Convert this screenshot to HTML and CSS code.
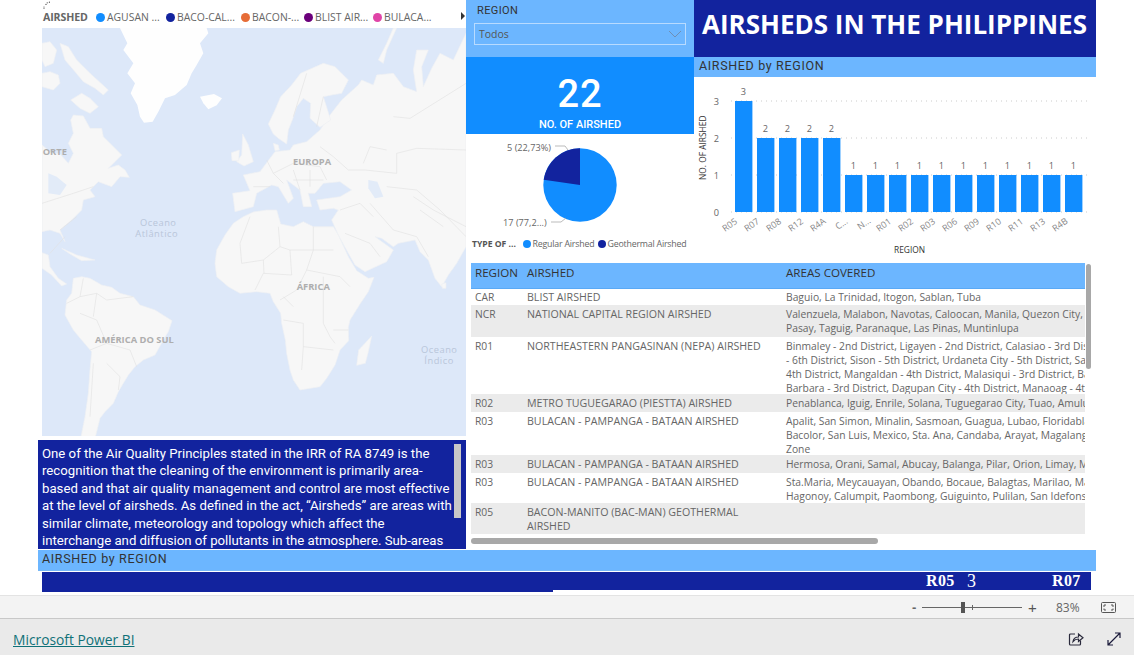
FILE: index.html
```html
<!DOCTYPE html>
<html lang="en">
<head>
<meta charset="utf-8">
<title>Airsheds in the Philippines</title>
<link rel="stylesheet" href="styles.css">
</head>
<body>
<main class="canvas">
  <div class="report">
    <section class="left">
      <div class="legend">
        <svg class="loader" viewBox="0 0 8 8" width="8" height="8"><circle cx="1" cy="6" r=".6"/><circle cx="1" cy="7.600" r=".5"/><circle cx="3" cy="3.400" r=".6"/><circle cx="4.200" cy="1.800" r=".6"/><circle cx="6.400" cy="1.200" r=".6"/></svg>
        <span class="legend-title">AIRSHED</span>
        <span class="legend-item w-agusan"><i class="dot c1"></i>AGUSAN ...</span>
        <span class="legend-item w-baco"><i class="dot c2"></i>BACO-CAL...</span>
        <span class="legend-item w-bacon"><i class="dot c3"></i>BACON-...</span>
        <span class="legend-item w-blist"><i class="dot c4"></i>BLIST AIR...</span>
        <span class="legend-item"><i class="dot c5"></i>BULACA...</span>
        <span class="legend-arrow"></span>
      </div>
      <svg class="map" viewBox="6 -6 1272 1224" preserveAspectRatio="none">
        <g class="land">
          <path d="M6 345L35 370 60 372 85 400 100 370 85 340 100 310 92 270 100 255 130 258 150 295 185 295 190 320 215 345 245 375 225 395 205 415 235 405 255 420 268 442 240 440 215 470 175 455 150 480 165 500 130 510 125 540 95 570 60 600 75 635 60 610 30 600 6 605Z"/>
          <path d="M60 40L85 50 110 90 150 130 205 180 190 195 165 175 130 155 105 125 75 90Z"/>
          <path d="M6 130L30 125 55 135 60 160 40 180 6 170Z"/>
          <path d="M6 40L30 35 50 60 40 100 15 110 6 90Z"/>
          <path d="M92 210L125 190 150 205 175 230 150 250 120 235Z"/>
          <path d="M6 668L25 675 30 710 55 745 80 762 65 768 35 735 6 715Z"/>
          <path d="M65 655L110 675 165 690 125 692 90 672Z"/>
          <path d="M100 745L125 740 150 745 185 765 215 772 240 790 280 800 300 825 345 840 396 872 385 905 370 930 345 975 310 990 285 1010 265 1035 250 1060 235 1085 220 1120 195 1145 180 1165 165 1225 122 1225 135 1160 145 1090 150 1020 155 965 125 930 100 900 75 855 80 810 95 790Z"/>
          <path d="M530 660L555 615 580 580 610 560 640 546 680 540 710 540 722 582 760 590 790 575 820 590 880 590 895 615 925 680 950 722 985 745 1002 742 985 785 960 822 930 870 925 892 926 932 900 960 885 1005 860 1045 840 1070 780 1080 760 1050 750 1020 740 970 736 930 725 880 722 850 700 815 690 790 650 785 600 790 565 770 530 740 525 700Z"/>
          <path d="M840 300L870 255 905 210 955 165 965 150 1000 165 1010 135 1060 130 1090 170 1130 185 1120 120 1130 60 1165 60 1145 110 1150 170 1175 115 1200 70 1240 90 1278 10 1278 650 1250 700 1225 735 1205 770 1185 745 1165 690 1140 665 1125 630 1075 640 1060 650 1025 625 1005 620 1060 660 1040 695 975 725 945 705 925 670 895 615 875 570 895 540 880 535 840 540 830 510 900 500 935 480 900 455 850 460 825 490 805 490 815 530 790 530 780 480 760 465 740 450 760 505 745 520 715 470 695 465 650 490 640 530 585 545 578 490 630 482 610 435 660 425 690 385 705 365 750 360 760 345 800 335Z"/>
          <path d="M685 282L705 240 722 200 755 165 782 130 850 100 885 110 925 150 905 190 875 195 850 200 872 270 840 292 810 265 812 220 790 205 770 230 760 262 745 300 740 342 715 325 700 312Z"/>
          <path d="M1015 90L1040 40 1060 -6 1070 -6 1040 60 1030 100Z"/>
          <path d="M590 395L605 375 608 312 625 345 640 395 612 408Z"/>
          <path d="M574 368L598 360 596 392 576 392Z"/>
          <path d="M700 340L715 345 718 360 705 362Z"/>
          <path d="M956 960L975 940 995 918 985 965 976 1000 950 1006Z"/>
          <path d="M1205 762L1218 758 1218 775 1207 775Z"/>
        </g>
        <g class="snow">
          <path d="M240 -6L500 -6 505 10 480 40 490 70 470 105 455 130 440 165 405 195 375 205 355 245 338 275 312 278 300 260 292 225 272 190 285 160 262 130 280 100 250 60 262 40Z"/>
          <path d="M480 200L522 192 546 205 530 226 505 238 490 220Z"/>
        </g>
        <g class="lakes">
          <path d="M985 450L1012 455 1030 500 1005 505 985 475Z"/>
          <path d="M25 430L50 440 80 465 60 495 25 490Z"/>
        </g>
        <g class="borders">
          <path d="M600 640L630 560M600 640L605 700 670 690 720 650 715 590M720 650L750 660 820 660 820 590M820 660L880 660M750 660L755 735 670 730 645 780M670 690L672 730M800 720L820 660M800 720L770 780 720 810M800 720L900 740M850 740L850 880 870 920 885 940M730 870L790 880 790 950 785 1020M790 950L880 960M880 900L925 900M900 740L930 770M730 800L760 830"/>
          <path d="M130 745L120 800 170 790 200 810 280 800M120 800L80 820M120 850L170 870 200 940 270 960 290 1010M150 960L200 940M170 790L160 860M200 1000L240 1040M240 1040L235 1080M160 1000L150 1160"/>
          <path d="M1278 360L1130 355 1070 370 1070 430 975 420 925 420 880 380 840 350M1040 470L1130 480 1200 540 1278 620M990 520L1060 600 1130 620M900 540L960 520 1000 560M915 610L990 640 1020 680M1130 620L1165 680M1040 360L990 350 970 400M1278 160L1110 265 1060 260"/>
          <path d="M700 430L760 400 840 410 860 450M700 430L730 460M760 420L780 480M810 420L810 470M760 450L850 450M680 390L700 430M640 470L690 470M850 200L830 290M800 130L760 260"/>
          <path d="M6 520L100 490 160 470M60 600L110 560M30 670L75 620"/>
          <path d="M1120 500L1180 540 1278 590M1140 540L1210 590"/>
        </g>
        <text class="map-label" x="8" y="374">ORTE</text>
        <text class="map-label" x="759" y="404">EUROPA</text>
        <text class="map-label" x="770" y="781">ÁFRICA</text>
        <text class="map-label" x="165" y="940">AMÉRICA DO SUL</text>
        <text class="map-sea" x="300" y="588">Oceano</text>
        <text class="map-sea" x="286" y="620">Atlântico</text>
        <text class="map-sea" x="1143" y="970">Oceano</text>
        <text class="map-sea" x="1153" y="1002">Índico</text>
      </svg>
      <div class="intro">
        <p>One of the Air Quality Principles stated in the IRR of RA 8749 is the<br>recognition that the cleaning of the environment is primarily area-<br>based and that air quality management and control are most effective<br>at the level of airsheds. As defined in the act, “Airsheds” are areas with<br>similar climate, meteorology and topology which affect the<br>interchange and diffusion of pollutants in the atmosphere. Sub-areas</p>
        <span class="intro-thumb"></span>
      </div>
    </section>

    <section class="right">
      <div class="top">
        <div class="middle">
          <div class="slicer">
            <div class="din slicer-label">REGION</div>
            <div class="dropdown"><span>Todos</span>
              <svg class="chevron" viewBox="0 0 14 8" width="14" height="8"><path d="M1 1L7 7 13 1"/></svg>
            </div>
          </div>
          <div class="card">
            <div class="din card-value">22</div>
            <div class="din card-label">NO. OF AIRSHED</div>
          </div>
          <svg class="pie" viewBox="466 134 228 127">
            <circle class="p-blue" cx="580" cy="185" r="36.700"/>
            <path class="p-dark" d="M580 185V148.300A36.700 36.700 0 0 0 543.700 179.800Z"/>
            <path class="leader" d="M555 146H565L568 150M551 222H561L566 218"/>
            <text class="lbl" x="507" y="151">5 (22,73%)</text>
            <text class="lbl" x="503" y="226">17 (77,2...)</text>
            <text class="lbl-b" x="472" y="247">TYPE OF ...</text>
            <circle class="p-blue" cx="527" cy="244" r="4"/>
            <text class="lbl-n" x="532.500" y="247">Regular Airshed</text>
            <circle class="p-dark" cx="602" cy="244" r="4"/>
            <text class="lbl-n" x="607.500" y="247">Geothermal Airshed</text>
          </svg>
        </div>
        <div class="side">
          <h1 class="title">AIRSHEDS IN THE PHILIPPINES</h1>
          <div class="din band">AIRSHED by REGION</div>
          <svg class="chart" viewBox="694 77 402 186">
            <path class="grid" d="M731 101H1088M731 138H1088M731 175H1088M731 212H1088"/>
            <g class="bars">
              <rect x="735" y="101" width="17.400" height="111"/><rect x="757" y="138" width="17.400" height="74"/><rect x="779" y="138" width="17.400" height="74"/><rect x="801" y="138" width="17.400" height="74"/><rect x="823" y="138" width="17.400" height="74"/><rect x="845" y="175" width="17.400" height="37"/><rect x="867" y="175" width="17.400" height="37"/><rect x="889" y="175" width="17.400" height="37"/><rect x="911" y="175" width="17.400" height="37"/><rect x="933" y="175" width="17.400" height="37"/><rect x="955" y="175" width="17.400" height="37"/><rect x="977" y="175" width="17.400" height="37"/><rect x="999" y="175" width="17.400" height="37"/><rect x="1021" y="175" width="17.400" height="37"/><rect x="1043" y="175" width="17.400" height="37"/><rect x="1065" y="175" width="17.400" height="37"/>
            </g>
            <g class="vals">
              <text x="743.500" y="95">3</text><text x="765.500" y="132">2</text><text x="787.500" y="132">2</text><text x="809.500" y="132">2</text><text x="831.500" y="132">2</text><text x="853.500" y="169">1</text><text x="875.500" y="169">1</text><text x="897.500" y="169">1</text><text x="919.500" y="169">1</text><text x="941.500" y="169">1</text><text x="963.500" y="169">1</text><text x="985.500" y="169">1</text><text x="1007.500" y="169">1</text><text x="1029.500" y="169">1</text><text x="1051.500" y="169">1</text><text x="1073.500" y="169">1</text>
            </g>
            <g class="yticks">
              <text x="719" y="105">3</text><text x="719" y="142">2</text><text x="719" y="179">1</text><text x="719" y="216">0</text>
            </g>
            <g class="xticks">
              <text transform="translate(725 232) rotate(-35)">R05</text><text transform="translate(747 232) rotate(-35)">R07</text><text transform="translate(769 232) rotate(-35)">R08</text><text transform="translate(791 232) rotate(-35)">R12</text><text transform="translate(813 232) rotate(-35)">R4A</text><text transform="translate(838 230) rotate(-35)">C...</text><text transform="translate(860 230) rotate(-35)">N...</text><text transform="translate(879 232) rotate(-35)">R01</text><text transform="translate(901 232) rotate(-35)">R02</text><text transform="translate(923 232) rotate(-35)">R03</text><text transform="translate(945 232) rotate(-35)">R06</text><text transform="translate(967 232) rotate(-35)">R09</text><text transform="translate(989 232) rotate(-35)">R10</text><text transform="translate(1011 232) rotate(-35)">R11</text><text transform="translate(1033 232) rotate(-35)">R13</text><text transform="translate(1055 232) rotate(-35)">R4B</text>
            </g>
            <text class="axis" transform="translate(706 180) rotate(-90)">NO. OF AIRSHED</text>
            <text class="axis" x="894" y="253">REGION</text>
          </svg>
        </div>
      </div>
      <div class="table-wrap">
        <div class="table">
          <div class="row head"><div>REGION</div><div>AIRSHED</div><div>AREAS COVERED</div></div>
          <div class="row r-1"><div>CAR</div><div>BLIST AIRSHED</div><div>Baguio, La Trinidad, Itogon, Sablan, Tuba</div></div>
          <div class="row alt r-2"><div>NCR</div><div>NATIONAL CAPITAL REGION AIRSHED</div><div>Valenzuela, Malabon, Navotas, Caloocan, Manila, Quezon City, Marikina, Pasig<br>Pasay, Taguig, Paranaque, Las Pinas, Muntinlupa</div></div>
          <div class="row r-4"><div>R01</div><div>NORTHEASTERN PANGASINAN (NEPA) AIRSHED</div><div>Binmaley - 2nd District, Ligayen - 2nd District, Calasiao - 3rd District, Alaminos<br>- 6th District, Sison - 5th District, Urdaneta City - 5th District, San Fabian<br>4th District, Mangaldan - 4th District, Malasiqui - 3rd District, Bayambang<br>Barbara - 3rd District, Dagupan City - 4th District, Manaoag - 4th District</div></div>
          <div class="row alt r-1b"><div>R02</div><div>METRO TUGUEGARAO (PIESTTA) AIRSHED</div><div>Penablanca, Iguig, Enrile, Solana, Tuguegarao City, Tuao, Amulung, Alcala</div></div>
          <div class="row r-3"><div>R03</div><div>BULACAN - PAMPANGA - BATAAN AIRSHED</div><div>Apalit, San Simon, Minalin, Sasmoan, Guagua, Lubao, Floridablanca, Porac<br>Bacolor, San Luis, Mexico, Sta. Ana, Candaba, Arayat, Magalang, Clark Special<br>Zone</div></div>
          <div class="row alt r-1b"><div>R03</div><div>BULACAN - PAMPANGA - BATAAN AIRSHED</div><div>Hermosa, Orani, Samal, Abucay, Balanga, Pilar, Orion, Limay, Mariveles, Bagac</div></div>
          <div class="row r-2b"><div>R03</div><div>BULACAN - PAMPANGA - BATAAN AIRSHED</div><div>Sta.Maria, Meycauayan, Obando, Bocaue, Balagtas, Marilao, Malolos, Plaridel<br>Hagonoy, Calumpit, Paombong, Guiguinto, Pulilan, San Idefonso, Baliuag</div></div>
          <div class="row alt r-2"><div>R05</div><div>BACON-MANITO (BAC-MAN) GEOTHERMAL<br>AIRSHED</div><div></div></div>
        </div>
        <span class="v-thumb"></span>
        <span class="h-thumb"></span>
      </div>
    </section>
  </div>

  <div class="din wide-band">AIRSHED by REGION</div>
  <div class="ticker">
    <div class="ticker-left"></div>
    <div class="ticker-right"><span class="t-a">R05</span><span class="t-b">3</span><span class="t-c">R07</span></div>
  </div>
</main>

<div class="statusbar">
  <span class="zoom-sign minus">-</span>
  <span class="slider"><i class="tick"></i><i class="thumb"></i></span>
  <span class="zoom-sign plus">+</span>
  <span class="pct">83%</span>
  <svg class="fit" viewBox="0 0 15 11" width="15" height="11"><rect x=".5" y=".5" width="14" height="10" rx="1"/><path d="M3 5V3H5M10 3H12V5M12 6.500V8H10M5 8H3V6.500"/></svg>
</div>
<footer class="footer">
  <a class="brand" href="#">Microsoft Power BI</a>
  <div class="foot-icons">
    <svg class="share" viewBox="0 0 16 16" width="16" height="16"><path d="M7 3H2.500A1 1 0 0 0 1.500 4V13A1 1 0 0 0 2.500 14H11.500A1 1 0 0 0 12.500 13V9.500"/><path d="M5 10.500C5.500 7.500 7.500 6 10.500 6V3L15 6.800 10.500 10.500V8C8.500 8 6.500 8.700 5 10.500Z"/></svg>
    <svg class="expand" viewBox="0 0 14 14" width="14" height="14"><path d="M1 13L13 1M8 1H13V6M1 8V13H6"/></svg>
  </div>
</footer>
</body>
</html>
```
FILE: styles.css
```css
* { box-sizing: border-box; }
html, body { margin: 0; padding: 0; }
body {
  width: 1134px;
  height: 655px;
  overflow: hidden;
  background: #fff;
  font-family: "Open Sans", "Noto Sans", sans-serif;
  color: #555;
}
.din { font-family: "Roboto", "Liberation Sans", sans-serif; }

.canvas { height: 595px; padding-left: 38px; width: 1096px; }
.report { display: grid; grid-template-columns: 428px 630px; height: 550px; }

/* left column */
.left { display: flex; flex-direction: column; }
.legend {
  position: relative;
  display: flex;
  align-items: center;
  height: 28px;
  padding: 6px 0 0 5px;
  font-size: 10.400px;
  color: #666;
  white-space: nowrap;
}
.loader { position: absolute; left: 5px; top: 1px; fill: #444; }
.legend-title { width: 53px; font-weight: 700; font-size: 10.600px; letter-spacing: -.1px; }
.legend-item { display: flex; align-items: center; width: 75px; }
.w-agusan { width: 70px; }
.w-baco { width: 75px; }
.w-bacon { width: 63px; }
.w-blist { width: 69px; }
.dot { width: 9px; height: 9px; border-radius: 50%; margin-right: 2px; flex: none; }
.c1 { background: #118dff; }
.c2 { background: #12239e; }
.c3 { background: #e66c37; }
.c4 { background: #6b007b; }
.c5 { background: #e044a7; }
.legend-arrow {
  position: absolute;
  left: 423px;
  top: 12px;
  border-left: 4px solid #333;
  border-top: 4px solid transparent;
  border-bottom: 4px solid transparent;
}
.map { display: block; width: 424px; height: 408px; margin-left: 4px; background: #dde8f9; }
.land { filter: blur(1.5px); }
.land path { fill: #f7f7f7; stroke: #eef0f3; stroke-width: 2; }
.snow { filter: blur(1.5px); }
.snow path { fill: #fefefe; }
.lakes path { fill: #e2ebf8; }
.borders path { fill: none; stroke: #e0e0e0; stroke-width: 1.800; }
.map-label { font: 700 28px "Open Sans", sans-serif; fill: #aeaeae; }
.map-sea { font: 400 28px "Open Sans", sans-serif; fill: #b9c6da; letter-spacing: 1.500px; }

.intro {
  position: relative;
  height: 109px;
  margin-top: 4px;
  padding: 5px 8px 0 4px;
  overflow: hidden;
  background: #12239e;
  color: #fff;
  font-family: "Roboto", "Open Sans", sans-serif;
  font-size: 13.200px;
  line-height: 17.400px;
}
.intro p { margin: 0; white-space: nowrap; }
.intro-thumb { position: absolute; left: 416px; top: 4px; width: 7px; height: 74px; background: #c8c8c8; }

/* right column */
.top { display: grid; grid-template-columns: 228px 402px; height: 263px; }
.middle { display: flex; flex-direction: column; }
.slicer { height: 57px; padding: 4px 8px 0 8px; background: #6cb6ff; }
.slicer-label { padding-left: 3px; font-size: 11px; line-height: 14px; letter-spacing: .4px; color: #333; }
.dropdown {
  display: flex;
  align-items: center;
  justify-content: space-between;
  height: 22px;
  margin-top: 5px;
  padding: 0 3px 0 4px;
  border: 1px solid #b8dbff;
  font-size: 10.500px;
  color: #555;
}
.chevron { fill: none; stroke: #6f8fb5; stroke-width: 1; }
.card { height: 77px; padding-top: 15px; background: #118dff; color: #fff; text-align: center; }
.card-value { font-size: 38px; line-height: 44px; letter-spacing: 1px; font-weight: 500; }
.card-label { margin-top: 1px; font-size: 11px; line-height: 15px; font-weight: 500; }
.pie { display: block; width: 228px; height: 127px; }
.p-blue { fill: #118dff; }
.p-dark { fill: #12239e; }
.leader { fill: none; stroke: #aaa; stroke-width: .8; }
.lbl { font: 400 9.200px "Open Sans", sans-serif; fill: #666; }
.lbl-n { font: 400 8.800px "Open Sans", sans-serif; fill: #666; letter-spacing: -.2px; }
.lbl-b { font: 700 8.600px "Open Sans", sans-serif; fill: #555; }

.side { display: flex; flex-direction: column; }
.title {
  width: 402px;
  height: 57px;
  margin: 0;
  padding: 7px 0 0 8px;
  background: #12239e;
  color: #fff;
  font-size: 26px;
  line-height: 35px;
  font-weight: 700;
  white-space: nowrap;
}
.band { height: 20px; padding-left: 5px; background: #6cb6ff; color: #333; font-size: 12.500px; line-height: 18px; letter-spacing: .65px; }
.chart { display: block; width: 402px; height: 186px; }
.grid { fill: none; stroke: #ccc; stroke-width: 1; stroke-dasharray: 1 4; }
.bars rect { fill: #118dff; }
.vals text { font: 400 9.200px "Open Sans", sans-serif; fill: #666; text-anchor: middle; }
.yticks text { font: 400 9.200px "Open Sans", sans-serif; fill: #666; text-anchor: end; }
.xticks text { font: 400 9px "Open Sans", sans-serif; fill: #888; }
.axis { font: 400 8.400px "Open Sans", sans-serif; fill: #333; }

.table-wrap { position: relative; height: 287px; padding-left: 5px; overflow: hidden; }
.table { width: 614px; overflow: hidden; font-size: 10.300px; line-height: 14px; color: #666; }
.row { display: grid; grid-template-columns: 52px 259px 303px; padding-top: 2px; white-space: nowrap; }
.row > div { overflow: hidden; padding-left: 4px; }
.row > div:nth-child(2) { font-size: 10.650px; }
.head { height: 26px; padding-top: 3px; background: #6cb6ff; color: #333; font-size: 11.600px; border-bottom: 1px solid #5aa9f5; }
.row.head > div { font-size: 11.600px; }
.alt { background: #ebebeb; }
.r-1 { height: 16px; padding-top: 1px; }
.r-1b { height: 17.500px; }
.r-2 { height: 31.500px; }
.r-2b { height: 30px; }
.r-3 { height: 43.500px; }
.r-4 { height: 57.500px; }
.v-thumb { position: absolute; left: 620px; top: 1px; width: 5px; height: 105px; border-radius: 3px; background: #a8a8a8; }
.h-thumb { position: absolute; left: 5px; top: 275px; width: 407px; height: 6px; border-radius: 3px; background: #a8a8a8; }

.wide-band { width: 1058px; height: 21px; padding-left: 4px; background: #6cb6ff; color: #333; font-size: 12.500px; line-height: 18px; letter-spacing: .65px; border-bottom: 1px solid #78b8f5; }
.ticker { display: flex; align-items: flex-start; margin: 1px 0 0 4px; }
.ticker-left { width: 511px; height: 20px; background: #12239e; }
.ticker-right {
  display: flex;
  width: 538px;
  height: 18px;
  padding-left: 373px;
  background: #12239e;
  color: #fff;
  font-family: "Liberation Serif", serif;
  font-size: 16px;
  line-height: 18px;
}
.t-a { width: 41px; font-weight: 700; letter-spacing: .4px; }
.t-b { width: 85px; font-size: 18px; }
.t-c { font-weight: 700; letter-spacing: .4px; }

/* viewer chrome */
.statusbar {
  display: flex;
  align-items: center;
  height: 24px;
  padding-left: 912px;
  background: #f3f3f3;
  border-top: 1px solid #e3e3e3;
  border-bottom: 1px solid #c8c8c8;
  color: #666;
  font-size: 12px;
}
.zoom-sign { width: 10px; font-size: 13px; line-height: 1; font-family: "Liberation Sans", sans-serif; }
.minus { font-weight: 700; }
.slider { position: relative; width: 100px; height: 1px; margin-right: 6px; background: #666; }
.thumb { position: absolute; left: 39px; top: -5px; width: 4px; height: 11px; background: #555; }
.tick { position: absolute; left: 50px; top: -2px; width: 1px; height: 5px; background: #666; }
.plus { width: 28px; font-size: 15px; color: #555; }
.pct { width: 45px; }
.fit { fill: none; stroke: #555; stroke-width: 1; }
.footer {
  display: flex;
  align-items: center;
  justify-content: space-between;
  height: 36px;
  padding: 4px 13px 0 13px;
  background: #eaeaea;
}
.brand { color: #0f7178; font-size: 13.800px; text-decoration: underline; }
.foot-icons { display: flex; gap: 23px; align-items: center; }
.share { fill: none; stroke: #2a2a3c; stroke-width: 1.200; }
.expand { fill: none; stroke: #1a1a3a; stroke-width: 1.200; }
```
